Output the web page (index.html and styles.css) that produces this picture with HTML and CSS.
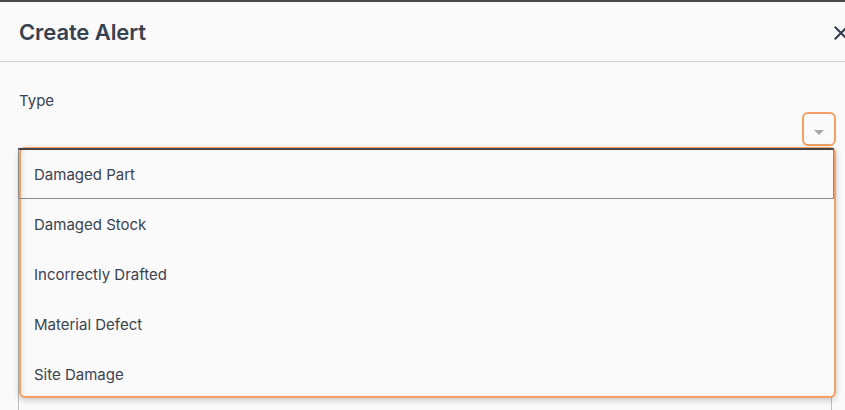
FILE: index.html
```html
<!DOCTYPE html>
<html>
<head>
<meta charset="utf-8">
<link rel="stylesheet" href="styles.css">
</head>
<body>
<div class="modal">
  <div class="header">
    <h1 class="title">Create Alert</h1>
    <span class="close">
      <svg width="14" height="14" viewBox="0 0 14 14"><path d="M1.5 1.5 L12.5 12.5 M12.5 1.5 L1.5 12.5" stroke="#2f3a4c" stroke-width="2" stroke-linecap="square"/></svg>
    </span>
  </div>
  <div class="content">
    <div class="label">Type</div>
    <div class="field">
      <div class="select-row">
        <span class="arrow-btn"><span class="caret"></span></span>
      </div>
      <div class="under-box"></div>
      <ul class="menu">
        <li class="item selected">Damaged Part</li>
        <li class="item">Damaged Stock</li>
        <li class="item">Incorrectly Drafted</li>
        <li class="item">Material Defect</li>
        <li class="item">Site Damage</li>
      </ul>
    </div>
  </div>
</div>
</body>
</html>
```

FILE: styles.css
```css
html, body {
  margin: 0;
  padding: 0;
  background: #fafafa;
  overflow: hidden;
}
body {
  font-family: Inter, "Noto Sans", sans-serif;
  color: #3b4352;
}
.modal {
  border-top: 2px solid #4a4a4a;
  width: 845px;
  height: 408px;
  overflow: hidden;
  background: #fafafa;
}
.header {
  height: 59px;
  border-bottom: 1px solid #cfcfcf;
  display: flex;
  align-items: center;
  justify-content: space-between;
  padding-left: 19px;
  padding-right: 0;
}
.title {
  margin: 0;
  font-size: 22px;
  font-weight: 600;
  color: #374151;
  letter-spacing: -0.1px;
}
.close {
  display: flex;
  width: 11px;
  overflow: hidden;
  margin-top: 2px;
}
.close svg { flex: none; }
.content {
  padding: 30px 0 0 19px;
}
.label {
  font-size: 15px;
  line-height: 18px;
  color: #3b4352;
}
.field {
  position: relative;
  width: 816px;
  margin-left: -1px;
}
.select-row {
  height: 38px;
  border-bottom: 2px solid #444;
  display: flex;
  justify-content: flex-end;
  align-items: flex-start;
}
.arrow-btn {
  box-sizing: border-box;
  width: 34px;
  height: 34px;
  margin-top: 2px;
  margin-right: -2px;
  border: 2px solid #f4a063;
  border-radius: 6px;
  display: flex;
  align-items: center;
  justify-content: center;
}
.caret {
  width: 0;
  height: 0;
  border-left: 5px solid transparent;
  border-right: 5px solid transparent;
  border-top: 5px solid #a9a9a9;
  margin-top: 6px;
}
.under-box {
  height: 300px;
  border-left: 1px solid #bdbdbd;
  border-right: 1px solid #bdbdbd;
  margin-right: 2px;
}
.menu {
  position: absolute;
  top: 37px;
  left: 1px;
  width: 817px;
  box-sizing: border-box;
  margin: 0;
  padding: 0;
  list-style: none;
  background: #fafafa;
  border: 2px solid #f4a063;
  border-radius: 6px;
  box-shadow: 0 2px 6px rgba(0,0,0,0.22), inset 3px 0 4px rgba(0,0,0,0.06);
  height: 251px;
}
.item {
  height: 50px;
  display: flex;
  align-items: center;
  padding-left: 13px;
  font-size: 15px;
  color: #3b4352;
  box-sizing: border-box;
}
.item.selected {
  margin: -1px 0 0 -3px;
  padding-left: 15px;
  border: 1px solid #8a8a8a;
  border-top: 2px solid #444;
  height: 51px;
}
```
